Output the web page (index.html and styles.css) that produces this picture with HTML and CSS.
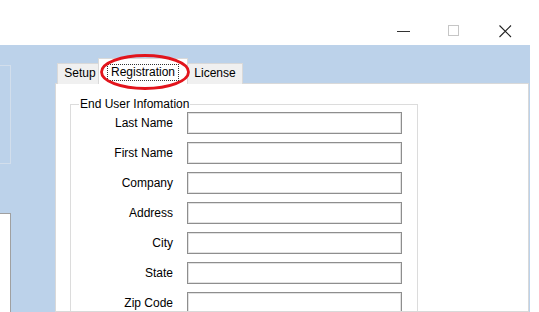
FILE: index.html
```
<!DOCTYPE html>
<html>
<head>
<meta charset="utf-8">
<title>Registration</title>
<link rel="stylesheet" href="styles.css">
</head>
<body>
<div class="titlebar">
	<div class="capbtn min">
		<svg width="14" height="12" viewBox="0 0 14 12"><line x1="0" y1="6.5" x2="13" y2="6.5" stroke="#333" stroke-width="1"/></svg>
	</div>
	<div class="capbtn max">
		<svg width="12" height="12" viewBox="0 0 12 12"><rect x="0.5" y="0.5" width="10" height="10" fill="none" stroke="#c6c6c6" stroke-width="1"/></svg>
	</div>
	<div class="capbtn close">
		<svg width="13" height="13" viewBox="0 0 13 13"><path d="M0.5 0.5 L12 12 M12 0.5 L0.5 12" stroke="#222" stroke-width="1.1" fill="none"/></svg>
	</div>
</div>

<div class="client">
	<div class="side">
		<div class="side-group"></div>
		<div class="side-list"></div>
	</div>

	<div class="tabs">
		<div class="tabstrip">
			<div class="tab setup">Setup</div>
			<div class="tab selected"><span class="focus">Registration</span></div>
			<div class="tab license">License</div>
			<!-- red marker drawn on top of the screenshot -->
			<svg class="marker" width="92" height="38" viewBox="0 0 92 38"><ellipse cx="46" cy="19" rx="43.5" ry="16.5" fill="none" stroke="#e2141c" stroke-width="2.8"/></svg>
		</div>
		<div class="tabpage">
			<fieldset class="group">
				<legend>End User Infomation</legend>
				<div class="form">
					<label>Last Name</label><input type="text">
					<label>First Name</label><input type="text">
					<label>Company</label><input type="text">
					<label>Address</label><input type="text">
					<label>City</label><input type="text">
					<label>State</label><input type="text">
					<label>Zip Code</label><input type="text">
				</div>
			</fieldset>
		</div>
	</div>
</div>
</body>
</html>
```

FILE: styles.css
```
body
{
margin: 0;
background: #fff;
font-family: "Liberation Sans", Arial, sans-serif;
font-size: 12px;
color: #000;
overflow: hidden;
}

.titlebar
{
display: flex;
justify-content: flex-end;
align-items: center;
width: 531px;
height: 45px;
padding-top: 17px;
box-sizing: border-box;
}

.capbtn
{
width: 50px;
height: 28px;
display: flex;
align-items: center;
justify-content: center;
}

.capbtn.close
{
width: 52px;
}

.client
{
display: flex;
width: 530px;
height: 267px;
background: #bcd2ea;
overflow: hidden;
}

.side
{
width: 55px;
flex: none;
display: flex;
flex-direction: column;
}

.side-group
{
margin-top: 20px;
width: 10px;
height: 97px;
border: 1px solid #d2deec;
border-left: none;
}

.side-list
{
margin-top: 49px;
width: 10px;
flex: 1;
background: #fff;
border-top: 1px solid #a0a0a0;
border-right: 1px solid #a0a0a0;
}

.tabs
{
flex: 1;
display: flex;
flex-direction: column;
margin-right: 1px;
padding-top: 13px;
}

.tabstrip
{
position: relative;
display: flex;
align-items: flex-end;
height: 25px;
padding-left: 2px;
}

.tab
{
height: 21px;
line-height: 19px;
box-sizing: border-box;
background: #f0f0f0;
border: 1px solid #d9d9d9;
border-bottom: none;
text-align: center;
margin-bottom: -1px;
}

.setup
{
width: 43px;
padding-left: 3px;
}

.selected
{
position: relative;
z-index: 1;
width: 90px;
height: 26px;
margin-left: -2px;
background: #fff;
padding-top: 4px;
}

.focus
{
display: inline-block;
border: 1px dotted #333;
padding: 0 3px;
line-height: 15px;
}

.license
{
width: 56px;
margin-left: -1px;
}

.marker
{
position: absolute;
left: 44px;
top: -5px;
z-index: 2;
}

.tabpage
{
flex: 1;
min-height: 0;
background: #fff;
border: 1px solid #d9d9d9;
padding: 13px 0 0 14px;
overflow: hidden;
}

.group
{
margin: 0;
padding: 1px 0 0 0;
width: 348px;
height: 216px;
box-sizing: border-box;
border: 1px solid #dcdcdc;
}

.group legend
{
margin-left: 8px;
padding: 0 1px;
line-height: 14px;
}

.form
{
display: grid;
grid-template-columns: 102px 215px;
grid-auto-rows: 22px;
column-gap: 14px;
row-gap: 8px;
align-items: center;
}

.form label
{
text-align: right;
}

.form input
{
height: 22px;
margin: 0;
padding: 0;
box-sizing: border-box;
border: 1px solid #8e8e8e;
box-shadow: inset 0 0 0 1px #e2e2e2;
background: #fff;
}
```
